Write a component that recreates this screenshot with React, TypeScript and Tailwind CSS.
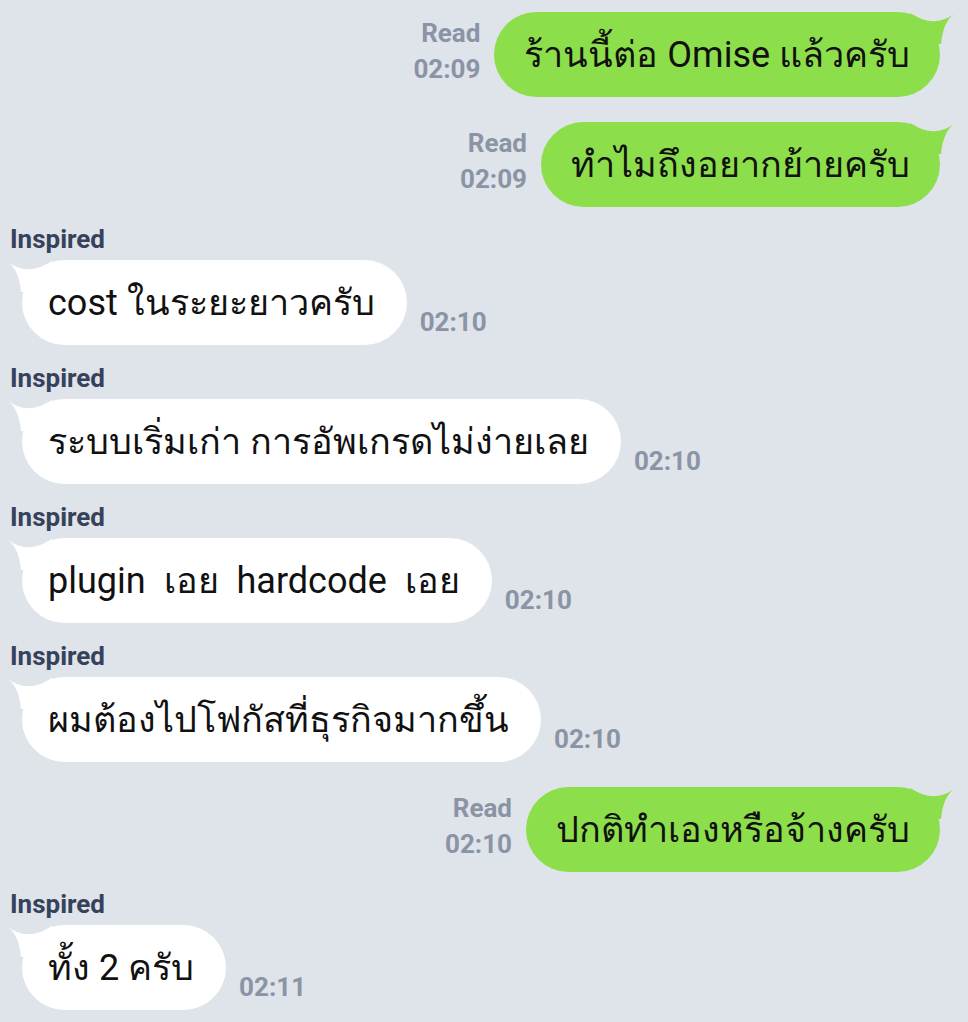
const messages = [
  { side: "out", text: "ร้านนี้ต่อ Omise แล้วครับ", time: "02:09" },
  { side: "out", text: "ทำไมถึงอยากย้ายครับ", time: "02:09" },
  { side: "in", text: "cost ในระยะยาวครับ", time: "02:10" },
  { side: "in", text: "ระบบเริ่มเก่า การอัพเกรดไม่ง่ายเลย", time: "02:10" },
  { side: "in", text: "plugin เอย hardcode เอย", time: "02:10", wide: true },
  { side: "in", text: "ผมต้องไปโฟกัสที่ธุรกิจมากขึ้น", time: "02:10" },
  { side: "out", text: "ปกติทำเองหรือจ้างครับ", time: "02:10" },
  { side: "in", text: "ทั้ง 2 ครับ", time: "02:11" },
];

// little horn on the bubble's top corner
const Tail = ({ color, flip }: { color: string; flip?: boolean }) => (
  <svg
    width="60"
    height="40"
    viewBox="0 0 60 40"
    className={
      flip
        ? "absolute -top-[2px] -left-[20px] -scale-x-100"
        : "absolute -top-[2px] -right-[20px]"
    }
  >
    <path d="M10 3 Q34 19 54 4 Q43 12 41 34 L6 34 Z" fill={color} />
  </svg>
);

const Outgoing = ({ text, time }: { text: string; time: string }) => (
  <div className="flex justify-end items-end pr-[28px]">
    <div className="flex flex-col items-end mr-[14px] mb-[10px] text-[26px] font-bold leading-[36px] text-[#8a94a5]">
      <span>Read</span>
      <span>{time}</span>
    </div>
    <div className="relative">
      <Tail color="#8dde4b" />
      <div className="relative h-[85px] rounded-full bg-[#8dde4b] px-[30px] flex items-center text-[36px] text-[#111]">
        {text}
      </div>
    </div>
  </div>
);

const Incoming = ({ text, time, wide }: { text: string; time: string; wide?: boolean }) => (
  <div className="flex flex-col items-start pl-[10px]">
    <div className="text-[26px] font-bold leading-[30px] text-[#36415a] mb-[6px]">
      Inspired
    </div>
    <div className="flex items-end pl-[12px]">
      <div className="relative">
        <Tail color="#ffffff" flip />
        <div
          className={
            wide
              ? "relative h-[85px] rounded-full bg-white pl-[26px] pr-[32px] flex items-center text-[36px] text-[#111] [word-spacing:9px]"
              : "relative h-[85px] rounded-full bg-white pl-[26px] pr-[32px] flex items-center text-[36px] text-[#111]"
          }
        >
          {text}
        </div>
      </div>
      <span className="ml-[13px] mb-[8px] text-[26px] font-bold leading-[30px] text-[#8a94a5]">
        {time}
      </span>
    </div>
  </div>
);

export default function App() {
  return (
    <div
      className="min-h-[1022px] w-[968px] bg-[#dfe3ea] pt-[12px] flex flex-col overflow-hidden"
      style={{ fontFamily: 'Roboto, "Noto Sans", "DejaVu Sans", sans-serif' }}
    >
      {messages.map((m, i) => {
        const prev = messages[i - 1];
        const gap =
          i === 0
            ? ""
            : m.side === "out"
              ? "mt-[25px]"
              : prev.side === "out"
                ? "mt-[17px]"
                : "mt-[18px]";
        return (
          <div key={i} className={gap}>
            {m.side === "out" ? (
              <Outgoing text={m.text} time={m.time} />
            ) : (
              <Incoming text={m.text} time={m.time} wide={m.wide} />
            )}
          </div>
        );
      })}
    </div>
  );
}
